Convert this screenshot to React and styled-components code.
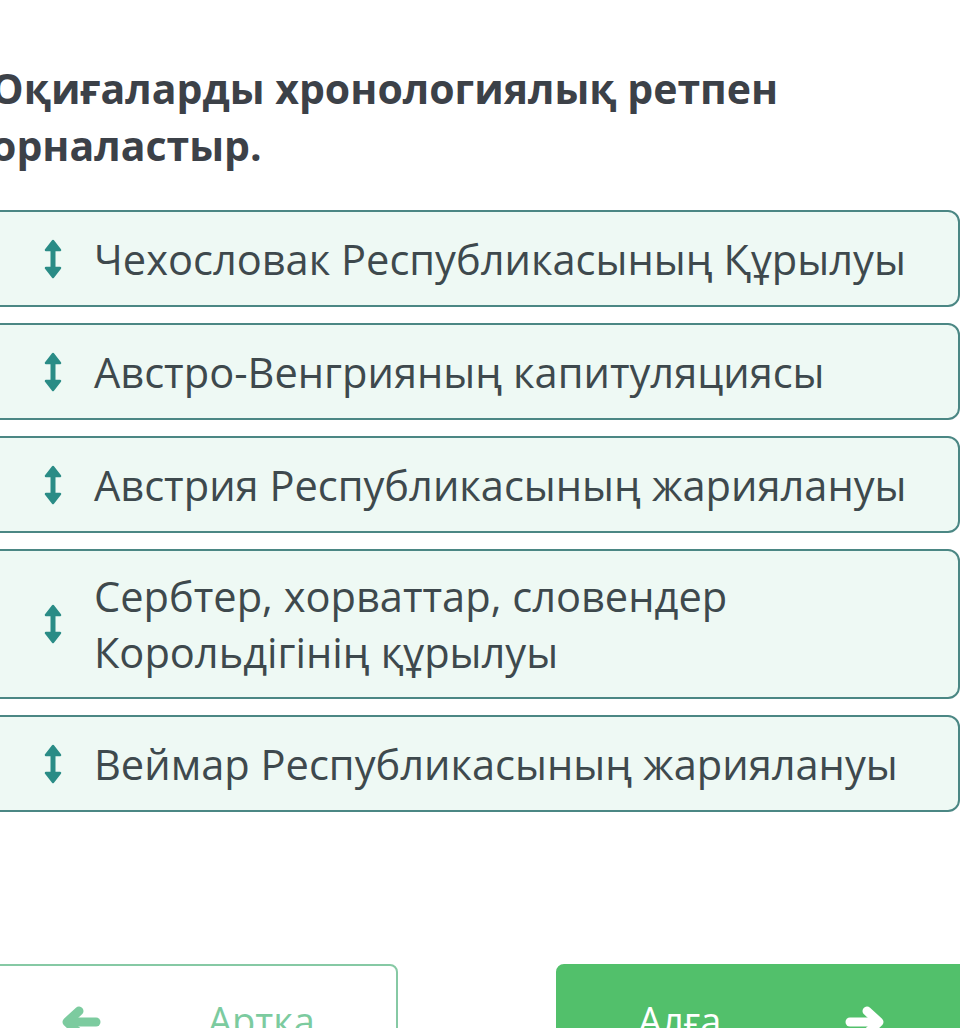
import React from "react";
import styled, { createGlobalStyle } from "styled-components";

const Global = createGlobalStyle`
  html, body {
    margin: 0;
    padding: 0;
    background: #ffffff;
    overflow: hidden;
  }
  body {
    font-family: "Open Sans", "Noto Sans", sans-serif;
  }
`;

const Page = styled.div`
  width: 960px;
  height: 1028px;
  overflow: hidden;
  padding-top: 60px;
  box-sizing: border-box;
`;

const Title = styled.h1`
  margin: 0 0 0 -9px;
  font-size: 41px;
  line-height: 57px;
  font-weight: 700;
  color: #3c4148;
`;

const List = styled.div`
  display: flex;
  flex-direction: column;
  gap: 16px;
  margin: 36px 0 0 -30px;
  width: 990px;
`;

const Card = styled.div`
  display: flex;
  align-items: center;
  gap: 32px;
  box-sizing: border-box;
  min-height: 97px;
  padding: ${(p) => (p.$tall ? "17px 20px 17px 72px" : "0 20px 0 72px")};
  background: #eef9f4;
  border: 2px solid #4b8784;
  border-radius: 12px;
`;

const Grip = styled.svg`
  flex: none;
  width: 18px;
  height: 42px;
`;

const Label = styled.span`
  font-size: 41.6px;
  line-height: 56px;
  color: #3e494d;
`;

const Actions = styled.div`
  display: flex;
  justify-content: space-between;
  margin: 152px 0 0 -26px;
  width: 1006px;
`;

const Button = styled.div`
  box-sizing: border-box;
  width: 424px;
  height: 112px;
  display: flex;
  align-items: center;
  border-radius: 8px;
  font-size: 38px;
  background: ${(p) => (p.$primary ? "#52c06b" : "#ffffff")};
  border: 2px solid ${(p) => (p.$primary ? "#52c06b" : "#86c9a4")};
  color: ${(p) => (p.$primary ? "#ffffff" : "#7ccb9f")};
`;

const BtnText = styled.span`
  margin-left: ${(p) => p.$ml}px;
`;

const ArrowSvg = styled.svg`
  flex: none;
  width: 42px;
  height: 36px;
  margin: 4px 0 0 ${(p) => p.$ml || 0}px;
  transform: ${(p) => (p.$flip ? "scaleX(-1)" : "none")};
`;

const GripIcon = () => (
  <Grip viewBox="0 0 18 42">
    <path d="M9 6 V36" stroke="#2a8c86" strokeWidth="5" />
    <path d="M2 12 L9 3 L16 12 Z" fill="#2a8c86" stroke="#2a8c86" strokeWidth="2.5" strokeLinejoin="round" />
    <path d="M2 30 L9 39 L16 30 Z" fill="#2a8c86" stroke="#2a8c86" strokeWidth="2.5" strokeLinejoin="round" />
  </Grip>
);

const Arrow = ({ left, color, ml }) => (
  <ArrowSvg viewBox="0 0 42 36" $ml={ml} $flip={left}>
    <path d="M6 18 H32" stroke={color} strokeWidth="9" strokeLinecap="round" />
    <path d="M23 7 L35 18 L23 29" fill="none" stroke={color} strokeWidth="9" strokeLinecap="round" strokeLinejoin="round" />
  </ArrowSvg>
);

const items = [
  "Чехословак Республикасының Құрылуы",
  "Австро-Венгрияның капитуляциясы",
  "Австрия Республикасының жариялануы",
  null,
  "Веймар Республикасының жариялануы",
];

export default function App() {
  return (
    <Page>
      <Global />
      <Title>
        Оқиғаларды хронологиялық ретпен
        <br />
        орналастыр.
      </Title>
      <List>
        {items.map((t, i) => (
          <Card key={i} $tall={!t}>
            <GripIcon />
            <Label>
              {t || (
                <>
                  Сербтер, хорваттар, словендер
                  <br />
                  Корольдігінің құрылуы
                </>
              )}
            </Label>
          </Card>
        ))}
      </List>
      <Actions>
        <Button>
          <Arrow left color="#7ccb9f" ml={84} />
          <BtnText $ml={106}>Артқа</BtnText>
        </Button>
        <Button $primary>
          <BtnText $ml={80}>Алға</BtnText>
          <Arrow color="#ffffff" ml={123} />
        </Button>
      </Actions>
    </Page>
  );
}
